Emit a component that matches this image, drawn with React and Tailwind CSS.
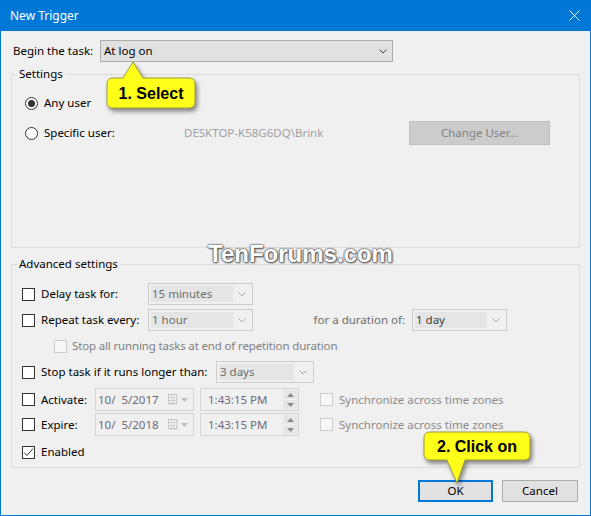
import React from 'react';
import { clsx } from 'clsx';

const Chevron = ({ color = '#404040' }) => (
  <svg width="8" height="5" viewBox="0 0 8 5">
    <path d="M0.5 0.5 L4 4 L7.5 0.5" fill="none" stroke={color} strokeWidth="1" />
  </svg>
);

const Check = ({ checked, disabled }) => (
  <span
    className={clsx(
      'w-[13px] h-[13px] border shrink-0 flex items-center justify-center',
      disabled ? 'border-[#cccccc] bg-[#f7f7f7]' : 'border-[#333333] bg-white'
    )}
  >
    {checked && (
      <svg width="11" height="11" viewBox="0 0 11 11">
        <path d="M1 5.5 L4 8.5 L10 1.5" fill="none" stroke="#333333" strokeWidth="1" />
      </svg>
    )}
  </span>
);

const Radio = ({ checked }) => (
  <span className="w-[13px] h-[13px] rounded-full border border-[#333333] bg-white shrink-0 flex items-center justify-center">
    {checked && <span className="w-[7px] h-[7px] rounded-full bg-[#333333]" />}
  </span>
);

// disabled combo box
const Combo = ({ text, className, dark }) => (
  <div className={clsx('h-[22px] border border-[#cccccc] bg-[#f0f0f0] p-[2px] flex', className)}>
    <span
      className={clsx(
        'flex-1 bg-[#e5e5e5] flex items-center pl-[1px]',
        dark ? 'text-[#3c3c3c]' : 'text-[#6d6d6d]'
      )}
    >
      {text}
    </span>
    <span className="w-[17px] flex items-center justify-center">
      <Chevron color="#a8a8a8" />
    </span>
  </div>
);

const DateBox = ({ text }) => (
  <div className="h-[23px] w-[99px] border border-[#d4d4d4] flex items-center pl-[2px] text-[#6d6a78]">
    <span className="whitespace-pre flex-1">{text}</span>
    <svg width="10" height="11" viewBox="0 0 10 11" className="mr-[3px]">
      <rect x="0.5" y="0.5" width="8" height="9" fill="#f4f4f4" stroke="#c4c4c4" />
      <path d="M0.5 3.5 H8.5 M0.5 6.5 H8.5 M3.5 0.5 V9.5 M6 0.5 V9.5" stroke="#d2d2d2" />
      <path d="M9 2 V10.5 H1.5" fill="none" stroke="#dddddd" />
    </svg>
    <svg width="7" height="4" viewBox="0 0 7 4" className="mr-[5px]">
      <path d="M0 0 H7 L3.5 4 Z" fill="#bdbdbd" />
    </svg>
  </div>
);

const TimeBox = () => (
  <div className="h-[23px] w-[99px] border border-[#d4d4d4] flex items-center pl-[7px] pr-[1px] text-[#6d6a78]">
    <span className="flex-1">1:43:15 PM</span>
    <div className="flex flex-col gap-[1px]">
      <span className="w-[14px] h-[9px] bg-[#e6e6e6] flex items-center justify-center">
        <svg width="7" height="4" viewBox="0 0 7 4"><path d="M0 4 H7 L3.5 0 Z" fill="#8a8a8a" /></svg>
      </span>
      <span className="w-[14px] h-[9px] bg-[#e6e6e6] flex items-center justify-center">
        <svg width="7" height="4" viewBox="0 0 7 4"><path d="M0 0 H7 L3.5 4 Z" fill="#8a8a8a" /></svg>
      </span>
    </div>
  </div>
);

const Group = ({ title, children, className }) => (
  <fieldset className={clsx('mx-[10px] border border-[#dcdcdc]', className)}>
    <legend className="ml-[5px] px-[2px] leading-[16px]">{title}</legend>
    {children}
  </fieldset>
);

const App = () => {
  return (
    <div className="relative w-[591px] h-[516px] flex flex-col bg-[#f0f0f0] overflow-hidden font-['Noto_Sans',sans-serif] text-[11.5px] text-black">
      {/* Title bar */}
      <div className="h-[31px] shrink-0 bg-[#0078d7] flex items-center justify-between pl-[10px] pr-[11px] text-white text-[12px]">
        <span>New Trigger</span>
        <svg width="11" height="11" viewBox="0 0 11 11">
          <path d="M0.5 0.5 L10.5 10.5 M10.5 0.5 L0.5 10.5" stroke="white" strokeWidth="1" />
        </svg>
      </div>

      <div className="flex-1 flex flex-col border-x border-b border-[#0078d7]">
        {/* Begin the task */}
        <div className="mt-[9px] h-[22px] flex items-center pl-[12px]">
          <span className="w-[87px]">Begin the task:</span>
          <div className="h-[22px] w-[293px] border border-[#adadad] bg-[#e1e1e1] flex items-center justify-between pl-[3px] pr-[5px]">
            <span>At log on</span>
            <Chevron />
          </div>
        </div>

        {/* Settings */}
        <Group title="Settings" className="mt-[4px]">
          <div className="pl-[13px] pt-[11px] pb-[102px] flex flex-col">
            <div className="h-[20px] flex items-center gap-[6px]">
              <Radio checked />
              <span>Any user</span>
            </div>
            <div className="mt-[8px] h-[24px] flex items-center gap-[6px]">
              <Radio />
              <span className="w-[134px]">Specific user:</span>
              <span className="w-[219px] text-[#a0a0a0]">DESKTOP-K58G6DQ\Brink</span>
              <button className="h-[24px] w-[141px] border border-[#bfbfbf] bg-[#cccccc] text-[#838383]">
                Change User...
              </button>
            </div>
          </div>
        </Group>

        {/* Advanced settings */}
        <Group title="Advanced settings" className="mt-[8px]">
          <div className="pl-[10px] pt-[11px] pb-[4px] flex flex-col">
            <div className="h-[22px] flex items-center gap-[6px]">
              <Check />
              <span className="w-[101px]">Delay task for:</span>
              <Combo text="15 minutes" className="w-[105px]" />
            </div>
            <div className="mt-[4px] h-[22px] flex items-center gap-[6px]">
              <Check />
              <span className="w-[101px]">Repeat task every:</span>
              <Combo text="1 hour" className="w-[105px]" />
              <span className="w-[147px] text-right pr-[1px] text-[#6d6d6d]">for a duration of:</span>
              <Combo text="1 day" className="w-[95px]" dark />
            </div>
            <div className="mt-[4px] h-[22px] flex items-center gap-[5px] pl-[32px]">
              <Check disabled />
              <span className="text-[#808080] tracking-[-0.15px]">Stop all running tasks at end of repetition duration</span>
            </div>
            <div className="mt-[4px] h-[22px] flex items-center gap-[6px]">
              <Check />
              <span className="w-[169px]">Stop task if it runs longer than:</span>
              <Combo text="3 days" className="w-[98px]" />
            </div>
            <div className="mt-[5px] h-[23px] flex items-center gap-[6px]">
              <Check />
              <span className="w-[48px]">Activate:</span>
              <DateBox text="10/  5/2017" />
              <TimeBox />
              <span className="w-[9px]" />
              <Check disabled />
              <span className="text-[#8a8a8a]">Synchronize across time zones</span>
            </div>
            <div className="mt-[2px] h-[23px] flex items-center gap-[6px]">
              <Check />
              <span className="w-[48px]">Expire:</span>
              <DateBox text="10/  5/2018" />
              <TimeBox />
              <span className="w-[9px]" />
              <Check disabled />
              <span className="text-[#8a8a8a]">Synchronize across time zones</span>
            </div>
            <div className="mt-[5px] h-[22px] flex items-center gap-[6px]">
              <Check checked />
              <span>Enabled</span>
            </div>
          </div>
        </Group>

        {/* Buttons */}
        <div className="mt-[12px] flex justify-end gap-[9px] pr-[12px]">
          <button className="h-[22px] w-[75px] border-2 border-[#0078d7] bg-[#e1e1e1]">OK</button>
          <button className="h-[22px] w-[76px] border border-[#adadad] bg-[#e1e1e1]">Cancel</button>
        </div>
      </div>

      {/* Watermark */}
      <span className="absolute left-[208px] top-[242px] leading-[24px] text-[24px] font-bold font-['Liberation_Sans',Arial,sans-serif] text-white [text-shadow:0_0_2px_#444,0_0_2px_#444,1px_1px_2px_#666] pointer-events-none">
        TenForums.com
      </span>

      {/* Callout 1 */}
      <div className="absolute left-[104px] top-[60px] w-[96px] h-[52px]">
        <svg width="96" height="52" viewBox="0 0 96 52" className="absolute inset-0 drop-shadow-[2px_3px_2px_rgba(0,0,0,0.45)]">
          <path
            d="M9 18 H19 L29 2 L39 18 H85 Q91 18 91 24 V42 Q91 48 85 48 H9 Q3 48 3 42 V24 Q3 18 9 18 Z"
            fill="#ffff1a"
            stroke="#9d9d3c"
            strokeWidth="1"
          />
        </svg>
        <span className="absolute left-[3px] top-[19px] w-[88px] h-[30px] flex items-center justify-center font-['Liberation_Sans',Arial,sans-serif] font-bold text-[16px]">
          1. Select
        </span>
      </div>

      {/* Callout 2 */}
      <div className="absolute left-[420px] top-[428px] w-[116px] h-[58px]">
        <svg width="116" height="58" viewBox="0 0 116 58" className="absolute inset-0 drop-shadow-[2px_3px_2px_rgba(0,0,0,0.45)]">
          <path
            d="M10 4 H104 Q110 4 110 10 V26 Q110 32 104 32 H45 L37 55 L27 32 H10 Q4 32 4 26 V10 Q4 4 10 4 Z"
            fill="#ffff1a"
            stroke="#9d9d3c"
            strokeWidth="1"
          />
        </svg>
        <span className="absolute left-[4px] top-[5px] w-[106px] h-[28px] flex items-center justify-center font-['Liberation_Sans',Arial,sans-serif] font-bold text-[16px]">
          2. Click on
        </span>
      </div>
    </div>
  );
};

export default App;
